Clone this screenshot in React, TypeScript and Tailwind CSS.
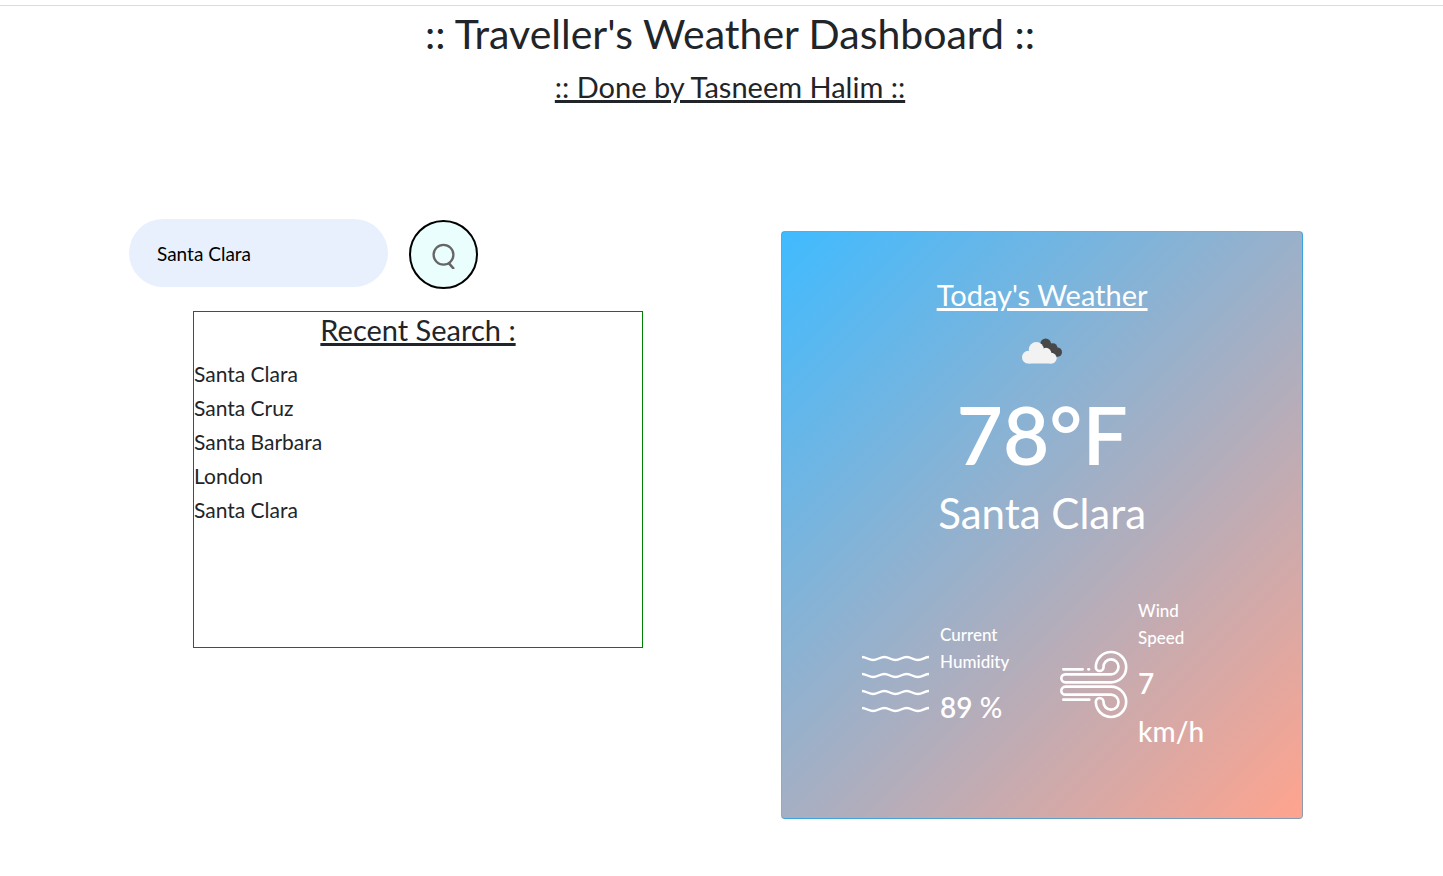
import { useState, type ReactNode } from "react";

const recentSearches = ["Santa Clara", "Santa Cruz", "Santa Barbara", "London", "Santa Clara"];

function SearchIcon() {
  return (
    <svg viewBox="0 0 26 28" className="h-7 w-[26px]" fill="none" stroke="#666" strokeWidth="2.3" aria-hidden="true">
      <circle cx="12.5" cy="13.8" r="9.9" />
      <path d="M17.6 21.8 22.9 28" strokeWidth="2.6" />
    </svg>
  );
}

function CloudsIcon() {
  return (
    <svg viewBox="41 26 120 77" className="h-[26px] w-10" role="img" aria-label="Broken clouds">
      <g fill="#484848">
        <circle cx="112" cy="43" r="16" />
        <circle cx="134" cy="54" r="13" />
        <circle cx="147" cy="68" r="14" />
        <path d="M100 52 130 42 148 56 146 82 122 80z" />
      </g>
      <g fill="#f2f2f2">
        <circle cx="60" cy="83" r="19" />
        <circle cx="84" cy="60" r="22.5" />
        <circle cx="113" cy="71" r="16" />
        <circle cx="129" cy="86" r="16" />
        <path d="M60 68 84 58 113 66 130 76V102H60z" />
      </g>
    </svg>
  );
}

function HumidityIcon() {
  return (
    <svg viewBox="0 0 67 67" className="size-[67px] shrink-0" fill="none" stroke="white" strokeWidth="2.3" aria-hidden="true">
      {[6, 23, 40, 57].map((y) => (
        <path
          key={y}
          d={`M0 ${y}C4 ${y} 7 ${y + 3} 11.2 ${y + 3}S18 ${y} 22.4 ${y}S29 ${y + 3} 33.5 ${y + 3}S40 ${y} 44.7 ${y}S51 ${y + 3} 55.8 ${y + 3}S63 ${y} 67 ${y}`}
        />
      ))}
    </svg>
  );
}

function WindIcon() {
  return (
    <svg
      viewBox="30 33 201 201"
      className="size-[67px] shrink-0 overflow-visible"
      fill="none"
      stroke="white"
      strokeWidth="8"
      strokeLinecap="round"
      strokeLinejoin="round"
      aria-hidden="true"
    >
      <path d="M40 88H98M115 88h2M40 179H118" />
      <path d="M46 127H183a45.5 45.5 0 1 0-45.5-45.5a11.5 11.5 0 0 0 23 0a22.5 22.5 0 1 1 22.5 21.5H46a12 12 0 0 0 0 24z" />
      <path d="M46 140H183a45.5 45.5 0 1 1-45.5 45.5a11.5 11.5 0 0 1 23 0a22.5 22.5 0 1 0 22.5-21.5H46a12 12 0 0 1 0-24z" />
    </svg>
  );
}

function Stat({ icon, label, children }: { icon: ReactNode; label: string; children: ReactNode }) {
  return (
    <div className="flex items-center gap-[11px]">
      {icon}
      <div className="w-[84px] pb-4">
        <p className="text-[17px] leading-[27px] font-medium">{label}</p>
        <p className="mt-2 text-[28px] leading-[48px] font-medium">{children}</p>
      </div>
    </div>
  );
}

export default function App() {
  const [city, setCity] = useState("Santa Clara");

  return (
    <div className="bg-white pt-[5px] font-['Gill_Sans','Gill_Sans_MT',Lato,sans-serif] text-[#212529]">
      <header className="border-t border-[#dcdcdc] pl-[17px] text-center">
        <h1 className="pt-0.5 text-[41px] leading-[52px]">:: Traveller's Weather Dashboard ::</h1>
        <h2 className="mt-2 text-[29px] leading-[38px] underline decoration-[3px]">:: Done by Tasneem Halim ::</h2>
      </header>

      <main className="mt-[113px] grid grid-cols-[5fr_4fr] pr-[140px] pb-14 pl-[129px]">
        <section>
          <form className="flex items-start gap-[21px]" onSubmit={(e) => e.preventDefault()}>
            <input
              type="text"
              aria-label="City"
              value={city}
              onChange={(e) => setCity(e.target.value)}
              className="h-[68px] w-[259px] rounded-full bg-[#e8f0fe] px-7 text-[19px] text-black outline-none"
            />
            <button
              type="submit"
              aria-label="Search"
              className="mt-px flex size-[69px] items-center justify-center rounded-full border-2 border-black bg-[#eafffd]"
            >
              <SearchIcon />
            </button>
          </form>
          <div className="mt-[22px] ml-16 h-[337px] w-[450px] border border-[#008000]">
            <h2 className="text-center text-[29px] leading-9 underline decoration-[3px]">Recent Search :</h2>
            <ul className="mt-[9px] text-[21px] leading-[34px]">
              {recentSearches.map((name, i) => (
                <li key={i}>{name}</li>
              ))}
            </ul>
          </div>
        </section>

        <section className="mt-3 flex h-[588px] flex-col items-center rounded border border-black/12 bg-[linear-gradient(135deg,#40bbff,#ffa48e)] pt-11 text-white">
          <h2 className="text-[29px] leading-[38px] underline decoration-[3px]">Today's Weather</h2>
          <div className="mt-6">
            <CloudsIcon />
          </div>
          <p className="mt-5 text-[80px] leading-[100px] font-semibold">78°F</p>
          <p className="text-[42px] leading-[58px]">Santa Clara</p>
          <div className="mt-[55px] flex items-center gap-9">
            <Stat icon={<HumidityIcon />} label="Current Humidity">
              <span className="font-semibold">89</span> %
            </Stat>
            <Stat icon={<WindIcon />} label="Wind Speed">
              <span className="font-semibold">7</span> km/h
            </Stat>
          </div>
        </section>
      </main>
    </div>
  );
}
